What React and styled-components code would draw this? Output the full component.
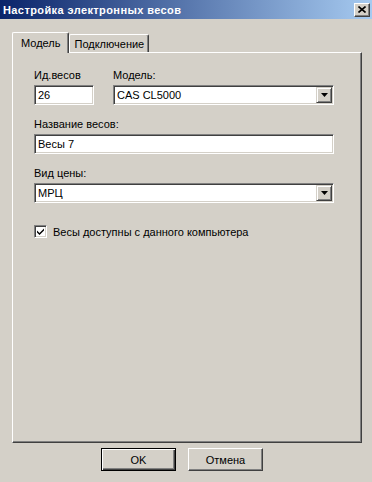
import React from "react";
import styled, { createGlobalStyle } from "styled-components";

const GlobalStyle = createGlobalStyle`
  html, body {
    margin: 0;
    padding: 0;
    background: #d4d0c8;
  }
  body {
    font-family: "Liberation Sans", Arial, sans-serif;
    font-size: 11px;
    color: #000;
  }
`;

const Window = styled.div`
  width: 372px;
  height: 482px;
  display: flex;
  flex-direction: column;
  background: #d4d0c8;
  box-sizing: border-box;
`;

const TitleBar = styled.div`
  height: 19px;
  flex-shrink: 0;
  display: flex;
  align-items: center;
  justify-content: space-between;
  padding: 0 2px 0 3px;
  background: linear-gradient(to right, #0a246a, #a6caf0);
  color: #fff;
  font-weight: bold;
  font-size: 11px;
  letter-spacing: 0.4px;
`;

const CloseButton = styled.div`
  width: 16px;
  height: 14px;
  box-sizing: border-box;
  background: #d4d0c8;
  border: 1px solid;
  border-color: #fff #404040 #404040 #fff;
  box-shadow: inset -1px -1px #808080;
  display: flex;
  align-items: center;
  justify-content: center;
`;

const Body = styled.div`
  flex: 1;
  display: flex;
  flex-direction: column;
  padding: 13px 10px 0 12px;
`;

const TabStrip = styled.div`
  display: flex;
  align-items: flex-end;
  height: 20px;
`;

const Tab = styled.div`
  position: relative;
  z-index: ${(p) => (p.$active ? 1 : 0)};
  height: ${(p) => (p.$active ? "21px" : "18px")};
  margin-bottom: ${(p) => (p.$active ? "-1px" : "0")};
  box-sizing: border-box;
  padding: 0 ${(p) => (p.$active ? "8px" : "4px")};
  display: flex;
  align-items: center;
  background: #d4d0c8;
  border-top: 1px solid #fff;
  border-left: 1px solid #fff;
  border-right: 1px solid #404040;
  box-shadow: inset -1px 0 #808080;
  border-radius: 2px 2px 0 0;
  padding-top: ${(p) => (p.$active ? "0" : "1px")};
`;

const Panel = styled.div`
  width: 350px;
  height: 391px;
  box-sizing: border-box;
  border: 1px solid;
  border-color: #fff #404040 #404040 #fff;
  box-shadow: inset -1px -1px #808080;
  padding: 16px 0 0 21px;
  display: flex;
  flex-direction: column;
`;

const Row = styled.div`
  display: flex;
  gap: 19px;
  margin-bottom: ${(p) => p.$gap ?? 13}px;
`;

const Field = styled.div`
  display: flex;
  flex-direction: column;
  width: ${(p) => p.$width}px;
`;

const Label = styled.div`
  height: 13px;
  line-height: 13px;
  margin-bottom: 3px;
  white-space: nowrap;
`;

const Sunken = styled.div`
  height: 20px;
  box-sizing: border-box;
  background: #fff;
  border: 1px solid;
  border-color: #808080 #fff #fff #808080;
  box-shadow: inset 1px 1px #404040, inset -1px -1px #d4d0c8;
  display: flex;
  align-items: center;
  padding: 0 2px 0 3px;
`;

const Value = styled.span`
  flex: 1;
  white-space: nowrap;
`;

const ArrowButton = styled.div`
  width: 16px;
  height: 16px;
  box-sizing: border-box;
  background: #d4d0c8;
  border: 1px solid;
  border-color: #d4d0c8 #404040 #404040 #d4d0c8;
  box-shadow: inset 1px 1px #fff, inset -1px -1px #808080;
  display: flex;
  align-items: center;
  justify-content: center;
  margin-right: -1px;
`;

const CheckRow = styled.div`
  display: flex;
  align-items: center;
  gap: 6px;
  margin-top: 22px;
`;

const CheckBox = styled.div`
  width: 13px;
  height: 13px;
  box-sizing: border-box;
  background: #fff;
  border: 1px solid;
  border-color: #808080 #fff #fff #808080;
  box-shadow: inset 1px 1px #404040, inset -1px -1px #d4d0c8;
  display: flex;
  align-items: center;
  justify-content: center;
`;

const ButtonRow = styled.div`
  display: flex;
  justify-content: center;
  gap: 12px;
  margin-top: 5px;
  padding-right: 10px;
`;

const Button = styled.div`
  width: 75px;
  height: 23px;
  box-sizing: border-box;
  background: #d4d0c8;
  display: flex;
  align-items: center;
  justify-content: center;
  border: 1px solid;
  border-color: ${(p) => (p.$default ? "#000" : "#fff #404040 #404040 #fff")};
  box-shadow: ${(p) =>
    p.$default
      ? "inset 1px 1px #fff, inset -1px -1px #404040, inset -2px -2px #808080"
      : "inset -1px -1px #808080"};
`;

function Combo({ value }) {
  return (
    <Sunken>
      <Value>{value}</Value>
      <ArrowButton>
        <svg width="7" height="4" viewBox="0 0 7 4">
          <path d="M0 0h7L3.5 4z" fill="#000" />
        </svg>
      </ArrowButton>
    </Sunken>
  );
}

export default function App() {
  return (
    <Window>
      <GlobalStyle />
      <TitleBar>
        <span>Настройка электронных весов</span>
        <CloseButton>
          <svg width="8" height="7" viewBox="0 0 8 7">
            <path d="M0.5 0.5L7.5 6.5M7.5 0.5L0.5 6.5" stroke="#000" strokeWidth="1.6" />
          </svg>
        </CloseButton>
      </TitleBar>
      <Body>
        <TabStrip>
          <Tab $active>Модель</Tab>
          <Tab>Подключение</Tab>
        </TabStrip>
        <Panel>
          <Row>
            <Field $width={60}>
              <Label>Ид.весов</Label>
              <Sunken>
                <Value>26</Value>
              </Sunken>
            </Field>
            <Field $width={221}>
              <Label>Модель:</Label>
              <Combo value="CAS CL5000" />
            </Field>
          </Row>
          <Row>
            <Field $width={300}>
              <Label>Название весов:</Label>
              <Sunken>
                <Value>Весы 7</Value>
              </Sunken>
            </Field>
          </Row>
          <Row $gap={0}>
            <Field $width={300}>
              <Label>Вид цены:</Label>
              <Combo value="МРЦ" />
            </Field>
          </Row>
          <CheckRow>
            <CheckBox>
              <svg width="7" height="7" viewBox="0 0 7 7">
                <path d="M0 2.5l2.5 2.5L7 0.5v2L2.5 7L0 4.5z" fill="#000" />
              </svg>
            </CheckBox>
            <span>Весы доступны с данного компьютера</span>
          </CheckRow>
        </Panel>
        <ButtonRow>
          <Button $default>OK</Button>
          <Button>Отмена</Button>
        </ButtonRow>
      </Body>
    </Window>
  );
}
